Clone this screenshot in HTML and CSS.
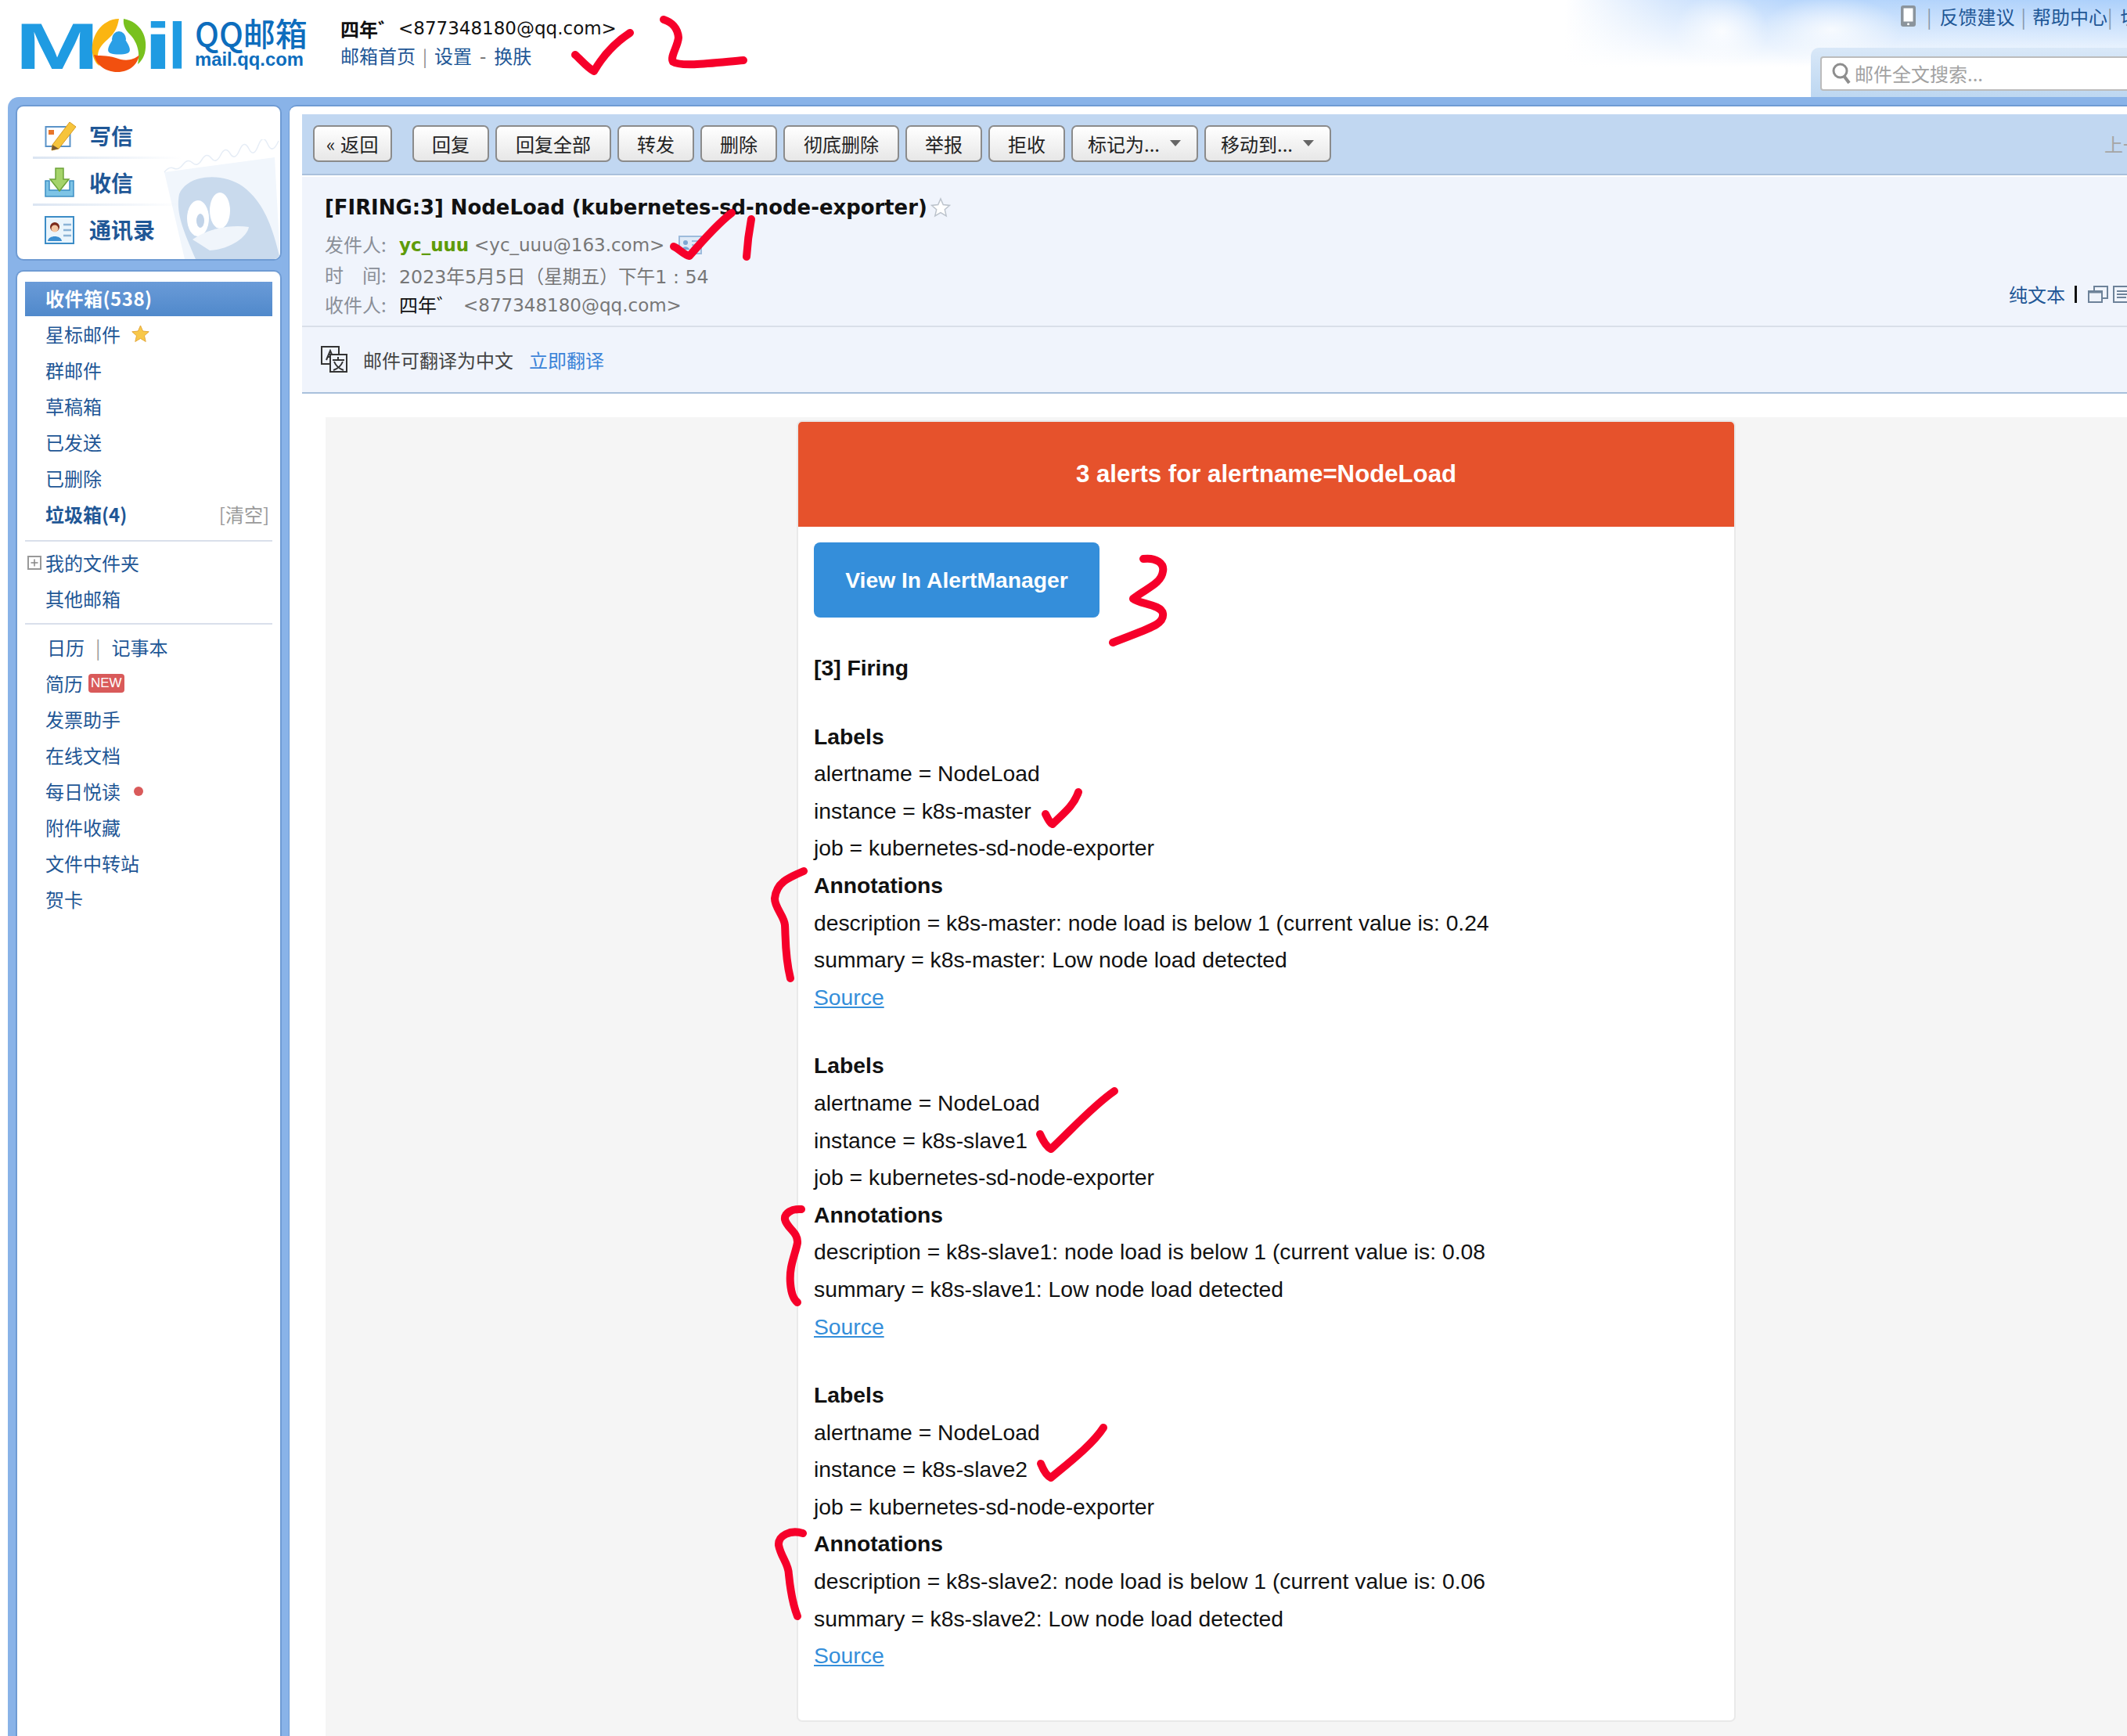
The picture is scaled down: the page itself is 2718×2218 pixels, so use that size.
FILE: index.html
```html
<!DOCTYPE html>
<html lang="zh-CN">
<head>
<meta charset="utf-8">
<title>QQ邮箱</title>
<link rel="stylesheet" href="styles.css">
</head>
<body>
<div class="page">
  <header class="top">
    <svg class="logo" viewBox="0 0 238 124" width="238" height="124">
      <text x="19" y="88" class="logo-letter" fill="#1f9be2" textLength="108" lengthAdjust="spacingAndGlyphs">M</text>
      <path d="M152 24C130 24 113 48 119 72C122 82 127 84 127 84C122 66 127 60 138 50C146 43 150 36 152 24Z" fill="#fbb511"/>
      <path d="M158 24C180 28 190 48 185 68C182 78 176 82 176 82C180 66 174 52 166 44C160 38 157 32 158 24Z" fill="#78c11e"/>
      <path d="M120 70C124 86 138 92 150 92C166 92 176 82 178 70C170 78 158 78 148 74C136 70 126 72 120 70Z" fill="#f2500f"/>
      <ellipse cx="152" cy="50" rx="9" ry="10" fill="#2a9fe6"/>
      <path d="M143 52C138 60 136 66 141 68C147 70 157 70 163 68C168 66 166 60 161 52Z" fill="#2a9fe6"/>
      <text x="183.600" y="88" class="logo-letter" fill="#1f9be2" textLength="37" lengthAdjust="spacingAndGlyphs">i</text>
      <text x="215" y="88" class="logo-letter" fill="#1f9be2" textLength="23" lengthAdjust="spacingAndGlyphs">l</text>
    </svg>
    <div class="brand">
      <div class="brand-name">QQ邮箱</div>
      <div class="brand-url">mail.qq.com</div>
    </div>
    <div class="user">
      <div class="user-line"><b class="user-name">四年゛</b><span class="user-mail">&lt;877348180@qq.com&gt;</span></div>
      <div class="user-links"><a>邮箱首页</a><i class="sep">|</i><a>设置</a><i class="dash">-</i><a>换肤</a></div>
    </div>
    <div class="top-right">
      <div class="top-links">
        <svg class="phone" viewBox="0 0 19 27" width="19" height="27"><rect width="19" height="27" rx="3" fill="#8b949c"/><rect x="3.500" y="3.500" width="12" height="17" fill="#fff"/><circle cx="9.500" cy="23.700" r="1.500" fill="#fff"/></svg>
        <i class="bar first">|</i><a>反馈建议</a><i class="bar">|</i><a>帮助中心</a><i class="bar tight">|</i><a>切换账号</a>
      </div>
      <div class="search-wrap">
        <div class="search">
          <svg class="lens" viewBox="0 0 26 30" width="26" height="30"><circle cx="11.500" cy="12.500" r="8.500" fill="none" stroke="#8e8e8e" stroke-width="3"/><path d="M17 20l6 8" stroke="#8e8e8e" stroke-width="4"/></svg>
          <span>邮件全文搜索...</span>
        </div>
      </div>
    </div>
  </header>

  <div class="frame">
    <aside class="side">
      <div class="quick">
        <svg class="penguin" viewBox="205 180 153 153" width="153" height="153">
          <path d="M210 222L351 203L358 333H236Z" fill="#f1f6fc"/>
          <path d="M210 222Q216 214 222 217T234 212T246 210T258 206T270 204T282 200T294 198T306 194T318 192T330 188T342 186T356 182" fill="none" stroke="#e6edf6" stroke-width="1.500"/>
          <path d="M229 250C240 224 285 222 310 240C340 262 350 300 358 333H250C236 300 224 275 229 250Z" fill="#c9daed"/>
          <ellipse cx="253" cy="281" rx="14" ry="23" fill="#fff"/>
          <ellipse cx="281" cy="271" rx="13" ry="23" fill="#fff"/>
          <ellipse cx="256" cy="284" rx="5" ry="9" fill="#c1d3e8"/>
          <path d="M246 308C262 296 292 288 318 292C316 304 296 320 268 322Z" fill="#f0f5fb"/>
        </svg>
        <a class="quick-row">
          <svg class="q-icon" viewBox="0 0 41 40" width="41" height="40"><rect x="1.500" y="9" width="31" height="25" fill="#fff" stroke="#5a93c8" stroke-width="2"/><rect x="5" y="13" width="7" height="6" fill="#e8752a"/><path d="M10 32L32 3L40 9L18 37L9 39Z" fill="#f6c43c" stroke="#d69a22"/><path d="M9 39L10 32L18 37Z" fill="#7a5a30"/></svg>
          <b>写信</b>
        </a>
        <a class="quick-row">
          <svg class="q-icon" viewBox="0 0 41 40" width="41" height="40"><path d="M1 18V38H37V18H32V30H6V18Z" fill="#7ec4e6" stroke="#3d8fc4" stroke-width="1.500"/><path d="M14 2H24V16H31L19 31L7 16H14Z" fill="#a5d36a" stroke="#6da33a" stroke-width="1.500"/></svg>
          <b>收信</b>
        </a>
        <a class="quick-row last">
          <svg class="q-icon" viewBox="0 0 41 40" width="41" height="40"><rect x="1" y="4" width="36" height="34" fill="#eaf5fc" stroke="#3c8cc6" stroke-width="2"/><circle cx="13" cy="17" r="6" fill="#7a2a1a"/><circle cx="13" cy="19" r="4.500" fill="#f3c8a4"/><path d="M4 35C5 27 21 27 22 35Z" fill="#3a8ed0"/><path d="M24 14h10M24 21h10M24 28h10" stroke="#8bb4d6" stroke-width="2.500"/></svg>
          <b>通讯录</b>
        </a>
      </div>
      <nav class="nav">
        <a class="item inbox">收件箱(538)</a>
        <a class="item">星标邮件<svg class="star" viewBox="0 0 24 24" width="23" height="23"><path d="M12 1l3.200 7.400 8 .8-6 5.300 1.800 7.900-7-4.200-7 4.200 1.800-7.900-6-5.300 8-.8z" fill="#f8c84a" stroke="#e3a63a"/></svg></a>
        <a class="item">群邮件</a>
        <a class="item">草稿箱</a>
        <a class="item">已发送</a>
        <a class="item">已删除</a>
        <a class="item bold">垃圾箱(4)<span class="clear">[清空]</span></a>
        <hr class="rule r1">
        <a class="item tree"><svg class="plus" viewBox="0 0 18 18" width="18" height="18"><rect x="1" y="1" width="16" height="16" fill="#fff" stroke="#999" stroke-width="2"/><path d="M9 4.500v9M4.500 9h9" stroke="#888" stroke-width="1.500"/></svg>我的文件夹</a>
        <a class="item">其他邮箱</a>
        <hr class="rule r2">
        <a class="item cal">日历<i class="cal-sep">|</i>记事本</a>
        <a class="item">简历<span class="new">NEW</span></a>
        <a class="item">发票助手</a>
        <a class="item">在线文档</a>
        <a class="item">每日悦读<i class="dot"></i></a>
        <a class="item">附件收藏</a>
        <a class="item">文件中转站</a>
        <a class="item">贺卡</a>
      </nav>
    </aside>

    <main class="main">
      <div class="toolbar">
        <button class="btn back">« 返回</button>
        <i class="tb-sep"></i>
        <button class="btn">回复</button>
        <button class="btn wide">回复全部</button>
        <button class="btn">转发</button>
        <button class="btn">删除</button>
        <button class="btn wide">彻底删除</button>
        <button class="btn">举报</button>
        <button class="btn">拒收</button>
        <button class="btn menu">标记为...<i class="caret"></i></button>
        <button class="btn menu">移动到...<i class="caret"></i></button>
        <span class="prev">上一封</span>
      </div>

      <div class="mail-head">
        <div class="meta">
          <div class="meta-rows">
            <h1 class="subject">[FIRING:3] NodeLoad (kubernetes-sd-node-exporter)<svg class="fav" viewBox="0 0 26 26" width="26" height="26"><path d="M13 2l3.300 7.600 8.200.8-6.200 5.400 1.900 8.100-7.200-4.300-7.200 4.300 1.900-8.100-6.200-5.400 8.200-.8z" fill="#fff" stroke="#bcc3cc" stroke-width="1.500"/></svg></h1>
            <div class="row"><span class="lab">发件人:</span><b class="from">yc_uuu</b><span class="addr">&lt;yc_uuu@163.com&gt;</span><svg class="vcard" viewBox="0 0 30 24" width="30" height="24"><rect x="1" y="1" width="28" height="22" fill="#dfeaf7" stroke="#9dbbdc" stroke-width="2"/><circle cx="9" cy="9" r="3" fill="#7ea6d2"/><path d="M4 18c1-5 9-5 10 0z" fill="#7ea6d2"/><path d="M17 7h9M17 12h9M17 17h9" stroke="#9dbbdc" stroke-width="2"/></svg></div>
            <div class="row"><span class="lab">时<i class="gap"></i>间:</span><span class="addr flush">2023年5月5日（星期五）下午1 : 54</span></div>
            <div class="row"><span class="lab">收件人:</span><span class="to">四年゛</span><span class="addr">&lt;877348180@qq.com&gt;</span></div>
          </div>
          <div class="tools">
            <a class="plain">纯文本</a><i class="tool-bar"></i>
            <svg viewBox="0 0 26 22" width="26" height="22"><rect x="8" y="1" width="17" height="15" fill="none" stroke="#6d8299" stroke-width="2"/><rect x="1" y="7" width="17" height="14" fill="#eef3fb" stroke="#6d8299" stroke-width="2"/><path d="M1 8h17" stroke="#6d8299" stroke-width="3"/></svg>
            <svg viewBox="0 0 26 22" width="26" height="22"><rect x="1" y="1" width="24" height="20" fill="none" stroke="#6d8299" stroke-width="2"/><path d="M5 7h16M5 11h16M5 15h12" stroke="#6d8299" stroke-width="2"/></svg>
          </div>
        </div>
      </div>

      <div class="translate">
        <svg class="tr-icon" viewBox="0 0 34 34" width="34" height="34"><rect x="1" y="1" width="22" height="22" fill="#f0f4fc" stroke="#333" stroke-width="2"/><path d="M7 18l5-12 5 12M9 14h6" fill="none" stroke="#333" stroke-width="2"/><rect x="12" y="11" width="21" height="22" fill="#f0f4fc" stroke="#333" stroke-width="2"/><path d="M22 14v3M15 18h15M17 20c2 5 6 9 12 11M28 20c-2 5-6 9-12 11" fill="none" stroke="#333" stroke-width="2"/></svg>
        <span class="tr-text">邮件可翻译为中文</span>
        <a class="tr-link">立即翻译</a>
      </div>

      <div class="mail-body">
        <div class="card">
          <div class="card-title">3 alerts for alertname=NodeLoad</div>
          <div class="card-body">
            <a class="view">View In AlertManager</a>
            <div class="firing">[3] Firing</div>
            <section class="alert">
              <strong>Labels</strong>
              <p>alertname = NodeLoad</p>
              <p>instance = k8s-master</p>
              <p>job = kubernetes-sd-node-exporter</p>
              <strong>Annotations</strong>
              <p>description = k8s-master: node load is below 1 (current value is: 0.24</p>
              <p>summary = k8s-master: Low node load detected</p>
              <a class="source">Source</a>
            </section>
            <section class="alert">
              <strong>Labels</strong>
              <p>alertname = NodeLoad</p>
              <p>instance = k8s-slave1</p>
              <p>job = kubernetes-sd-node-exporter</p>
              <strong>Annotations</strong>
              <p>description = k8s-slave1: node load is below 1 (current value is: 0.08</p>
              <p>summary = k8s-slave1: Low node load detected</p>
              <a class="source">Source</a>
            </section>
            <section class="alert">
              <strong>Labels</strong>
              <p>alertname = NodeLoad</p>
              <p>instance = k8s-slave2</p>
              <p>job = kubernetes-sd-node-exporter</p>
              <strong>Annotations</strong>
              <p>description = k8s-slave2: node load is below 1 (current value is: 0.06</p>
              <p>summary = k8s-slave2: Low node load detected</p>
              <a class="source">Source</a>
            </section>
          </div>
        </div>
      </div>
    </main>
  </div>

  <svg class="ink" viewBox="0 0 2718 2218" width="2718" height="2218">
    <path d="M735 70C742 76 750 86 759 91C770 72 785 55 805 42"/>
    <path d="M848 25C858 28 866 36 867 48C866 60 856 72 860 79C870 86 915 80 950 77"/>
    <path d="M861 315C868 318 874 326 881 327C900 305 918 285 935 272"/>
    <path d="M960 280C957 296 955 312 954 328"/>
    <path d="M1461 714C1478 712 1488 720 1486 730C1484 746 1464 752 1448 765C1456 772 1484 772 1486 784C1488 798 1470 802 1422 821"/>
    <path d="M1336 1040C1339 1046 1342 1052 1345 1053C1358 1040 1372 1030 1378 1012"/>
    <path d="M1027 1113C1006 1122 992 1128 990 1148C990 1160 1002 1170 1003 1182C1004 1198 1003 1222 1010 1250"/>
    <path d="M1329 1449C1333 1458 1338 1466 1343 1468C1365 1448 1395 1414 1424 1394"/>
    <path d="M1024 1545C1012 1544 1002 1550 1003 1558C1006 1570 1020 1574 1019 1588C1016 1604 1008 1618 1010 1640C1011 1652 1014 1660 1019 1664"/>
    <path d="M1330 1870C1334 1880 1338 1886 1343 1888C1362 1872 1396 1846 1410 1824"/>
    <path d="M1026 1959C1010 1954 994 1962 995 1974C998 1990 1008 1998 1008 2012C1010 2032 1014 2052 1019 2065"/>
  </svg>
</div>
</body>
</html>
```
FILE: styles.css
```css
* { box-sizing: border-box; }
html, body { margin: 0; padding: 0; }
body { background: #fff; font-family: "Noto Sans CJK SC", "DejaVu Sans", sans-serif; font-size: 24px; color: #1f5796; }
i { font-style: normal; }
a { color: inherit; text-decoration: none; }
.page { position: relative; width: 2718px; height: 2218px; overflow: hidden; }

/* header */
.top {
  display: flex; align-items: flex-start; height: 124px;
  background:
    radial-gradient(ellipse 60px 48px at 2200px 40px, rgba(255,255,255,.85), rgba(255,255,255,0)),
    radial-gradient(ellipse 90px 42px at 2340px 38px, rgba(255,255,255,.8), rgba(255,255,255,0)),
    linear-gradient(to bottom, rgba(255,255,255,0) 0, #fff 85px),
    linear-gradient(to right, #fff 2000px, #d6e7fd 2130px, #b9d7fc 2280px, #acd0fb 2718px);
}
.logo { flex: none; }
.logo-letter { font-family: "Liberation Sans", sans-serif; font-weight: 700; font-size: 84px; }
.brand { flex: none; width: 141px; margin: 19px 0 0 11px; color: #0d6dbd; white-space: nowrap; }
.brand-name { font-size: 41px; font-weight: 500; line-height: 44px; }
.brand-url { font-family: "Liberation Sans", sans-serif; font-weight: 700; font-size: 23.800px; line-height: 26px; }
.user { flex: none; margin: 18px 0 0 45px; width: 400px; }
.user-line { display: flex; align-items: center; height: 36px; color: #111; }
.user-name { width: 74px; font-size: 24px; }
.user-mail { font-family: "DejaVu Sans", sans-serif; font-size: 23px; }
.user-links { display: flex; align-items: center; height: 33px; }
.sep { margin: 0 9px; color: #888; font-size: 22px; }
.dash { margin: 0 10px; color: #666; }
.top-right { flex: none; margin-left: auto; width: 404px; }
.top-links { display: flex; align-items: center; height: 61px; padding: 0 0 20px 115px; white-space: nowrap; }
.phone { flex: none; }
.bar { margin: 0 8px 0 8px; color: #8899aa; }
.bar.first { margin: 0 10px 0 14px; }
.bar.tight { margin: 0 10px 0 0; }
.search-wrap { height: 63px; padding: 11px 0 0 12px; background: linear-gradient(#d9e8f8, #bdd7f1); border-top-left-radius: 10px; }
.search { display: flex; align-items: center; width: 420px; height: 44px; padding: 0 0 2px 12px; background: #fff; border: 2px solid #bcbcbc; border-radius: 4px; color: #a2a2a2; }
.lens { flex: none; margin-right: 4px; }

/* frame */
.frame { display: flex; height: 2094px; margin-left: 10px; padding-top: 10px; background: #89b3e8; border-top-left-radius: 14px; }
.side { flex: none; width: 359px; padding-left: 10px; }
.quick { position: relative; width: 340px; height: 199px; padding: 7px 0 0 20px; background: #fff; border: 2px solid #6f9bd3; border-radius: 10px; overflow: hidden; }
.penguin { position: absolute; right: 0; bottom: 0; }
.quick-row { position: relative; display: flex; align-items: center; width: 190px; height: 60px; padding-left: 15px; color: #1f5796; background: linear-gradient(to right, #dbe5f2, rgba(219,229,242,0)) left bottom / 100% 3px no-repeat; }
.quick-row.last { background: none; }
.quick-row b { margin-left: 16px; font-size: 28px; }
.q-icon { flex: none; }
.nav { width: 340px; height: 1900px; margin-top: 12px; padding: 13px 10px 0; background: #fff; border: 2px solid #6f9bd3; border-bottom: 0; border-radius: 10px 10px 0 0; }
.item { display: flex; align-items: center; height: 46px; padding: 0 0 3px 26px; white-space: nowrap; }
.inbox { height: 44px; margin-bottom: 1px; color: #fff; font-weight: 700; letter-spacing: .5px; background: linear-gradient(#6a9bd8, #5089cb); }
.bold { font-weight: 700; }
.clear { margin-left: auto; margin-right: 4px; color: #9a9a9a; font-weight: 400; }
.star { margin-left: 14px; }
.rule { height: 2px; margin: 0; border: 0; background: #d9dfeb; }
.r1 { margin: 9px 0 5px; }
.r2 { margin: 7px 0 7px; }
.tree { padding-left: 3px; }
.plus { margin-right: 5px; }
.cal { padding-left: 28px; }
.cal-sep { margin: 0 14px; color: #999; }
.new { margin-left: 7px; padding: 0 3px; background: #d95a5a; color: #fff; border-radius: 4px; font-family: "Liberation Sans", sans-serif; font-size: 17px; line-height: 24px; }
.dot { width: 12px; height: 12px; margin-left: 17px; border-radius: 50%; background: #d95a5a; }

/* main */
.main { flex: 1; min-width: 0; padding: 10px 0 0 16px; background: #fff; border-top: 2px solid #6f9bd3; border-left: 1px solid #6f9bd3; border-top-left-radius: 10px; }
.toolbar { display: flex; align-items: center; height: 78px; padding: 0 0 2px 14px; margin-bottom: 2px; background: #c1d7f1; border-bottom: 2px solid #a9c0dc; white-space: nowrap; }
.btn { flex: none; height: 47px; margin-right: 8px; padding: 0 23px; color: #222; font: inherit; background: linear-gradient(#fff, #e7e7e7); border: 2px solid #8b8b8b; border-radius: 7px; }
.back { width: 101px; padding: 0; letter-spacing: .5px; }
.wide { padding: 0 24px; }
.tb-sep { width: 2px; height: 36px; margin: 0 13px 0 5px; background: #eef3fa; }
.menu { display: flex; align-items: center; padding: 0 20px 0 19px; }
.caret { width: 0; height: 0; margin-left: 13px; border: 7px solid transparent; border-top: 8px solid #666; border-bottom: 0; }
.prev { margin-left: 980px; color: #a5a5a5; }

.mail-head { height: 190px; padding: 19px 0 0 29px; background: #f0f4fc; }
.meta { display: flex; justify-content: space-between; }
.subject { display: flex; align-items: center; margin: 0 0 9px; height: 40px; color: #111; font-family: "DejaVu Sans", "Noto Sans CJK SC", sans-serif; font-size: 25.900px; font-weight: 700; white-space: nowrap; }
.fav { margin-left: 4px; }
.row { display: flex; align-items: center; height: 38.500px; color: #7c7c7c; white-space: nowrap; }
.lab { display: flex; width: 95px; padding-bottom: 3px; color: #8a8f98; }
.gap { width: 24px; }
.from { width: 96px; color: #5e9b0a; font-family: "DejaVu Sans", sans-serif; font-size: 23px; }
.addr { font-family: "DejaVu Sans", "Noto Sans CJK SC", sans-serif; font-size: 23px; color: #777; }
.addr.flush { font-size: 23.700px; }
.to { width: 82px; padding-bottom: 3px; color: #111; }
.vcard { margin-left: 18px; }
.tools { display: flex; align-items: center; align-self: flex-end; gap: 6px; height: 30px; margin: 0 0 19px; width: 151px; flex: none; color: #1f5796; }
.plain { flex: none; margin-right: 6px; }
.tool-bar { flex: none; width: 3px; height: 22px; margin-right: 8px; background: #111; }
.tools svg { flex: none; }

.translate { display: flex; align-items: center; height: 87px; padding-left: 24px; background: #f0f4fc; border-top: 2px solid #d9dfe9; border-bottom: 2px solid #a9c0dc; }
.tr-icon { flex: none; margin-top: -2px; }
.tr-text { margin-left: 20px; padding-bottom: 1px; color: #444; }
.tr-link { margin-left: 20px; padding-bottom: 1px; color: #3b83d8; }

.mail-body { margin: 30px 0 0 30px; padding: 4px 0 0 602px; height: 1700px; background: #f5f5f5; }
.card { width: 1200px; background: #fff; border: 2px solid #e9e9e9; border-radius: 7px; overflow: hidden; font-family: "Liberation Sans", sans-serif; font-size: 28.300px; color: #111; }
.card-title { height: 134px; line-height: 134px; text-align: center; color: #fff; font-size: 31.200px; font-weight: 700; background: #e6522c; }
.card-body { padding: 20px 20px 58px; }
.view { display: block; width: 365px; height: 96px; line-height: 96px; text-align: center; color: #fff; font-weight: 700; background: #348eda; border-radius: 8px; }
.firing { margin-top: 41px; font-weight: 700; line-height: 47.600px; }
.alert { margin-top: 40px; line-height: 47.600px; }
.alert p, .alert strong, .source { display: block; margin: 0; height: 47.600px; }
.source { color: #348eda; text-decoration: underline; }

/* hand-drawn marks */
.ink { position: absolute; left: 0; top: 0; pointer-events: none; }
.ink path { fill: none; stroke: #f6002a; stroke-width: 10; stroke-linecap: round; stroke-linejoin: round; }
```
